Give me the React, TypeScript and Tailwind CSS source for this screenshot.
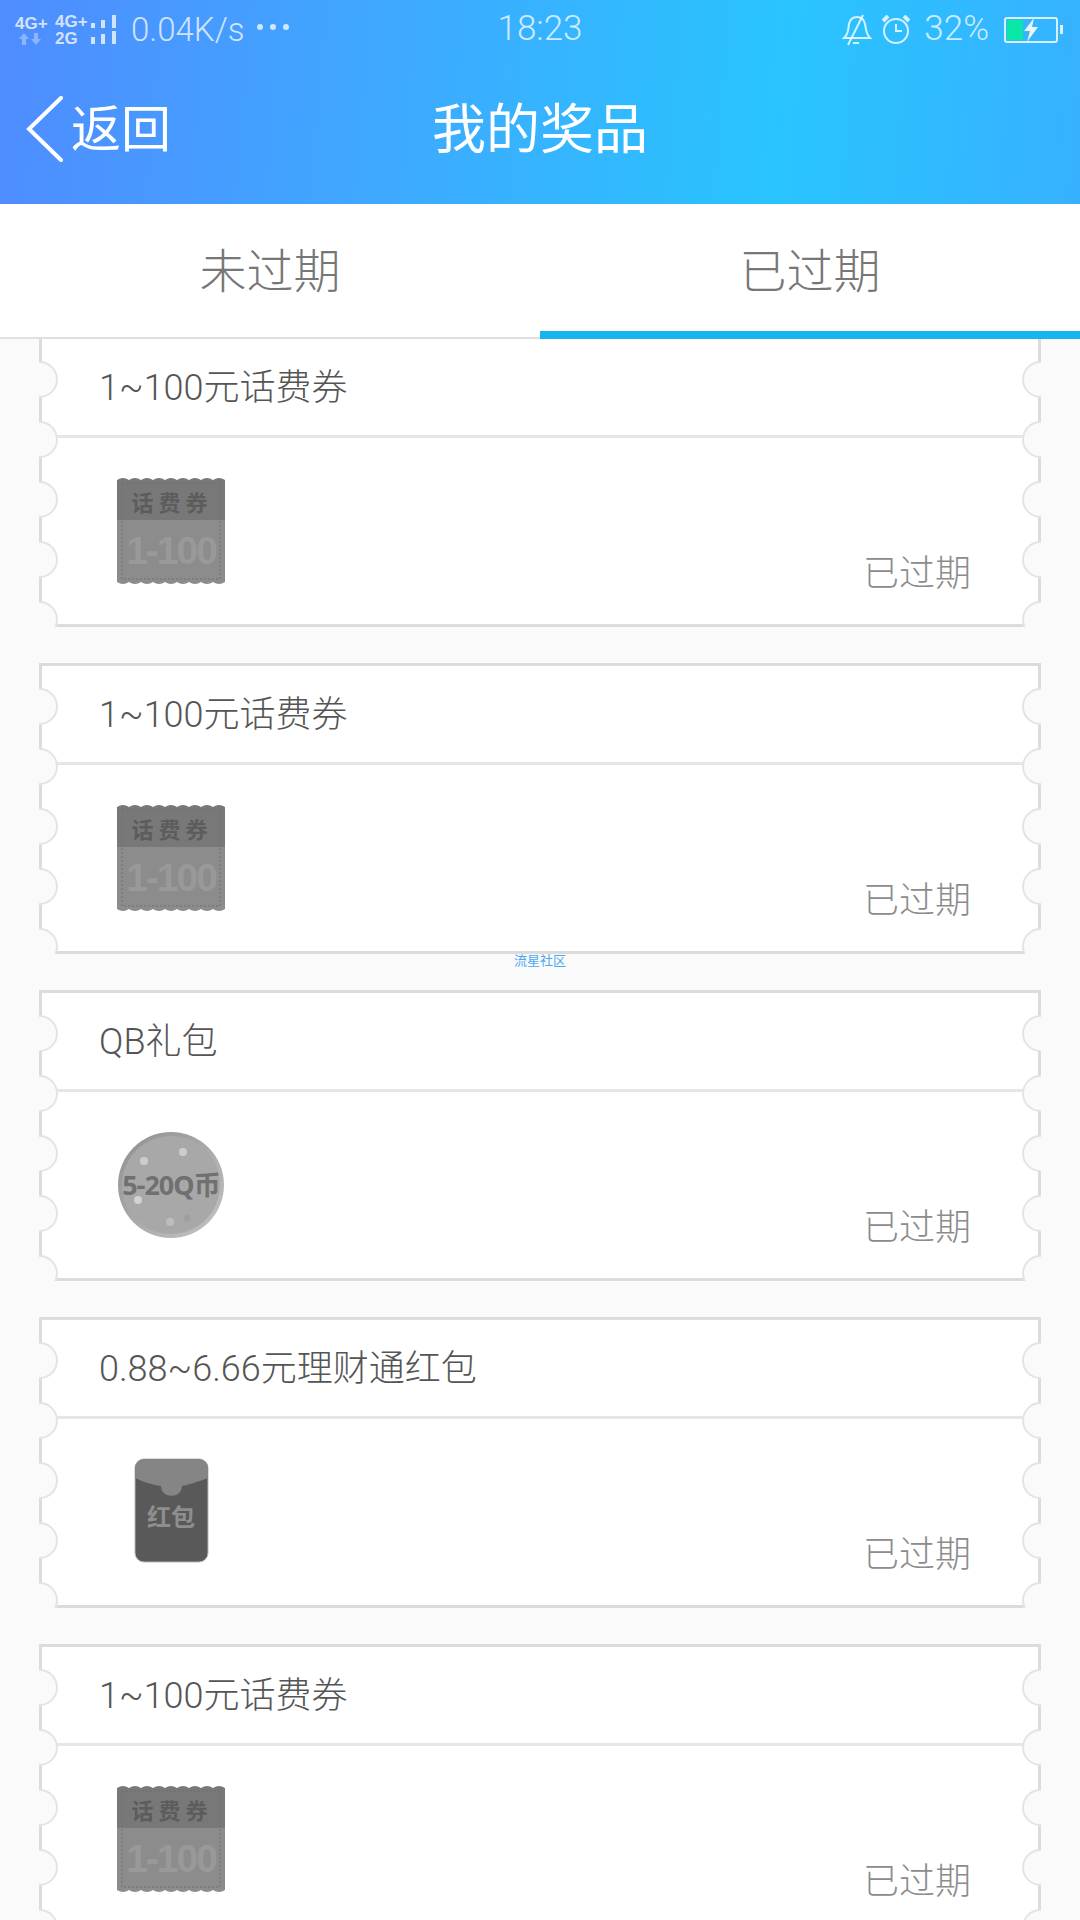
const prizes = [
  { id: 1, title: "1~100元话费券", kind: "voucher" },
  { id: 2, title: "1~100元话费券", kind: "voucher" },
  { id: 3, title: "QB礼包", kind: "coin" },
  { id: 4, title: "0.88~6.66元理财通红包", kind: "packet" },
  { id: 5, title: "1~100元话费券", kind: "voucher" },
];

function scallopPath(y: number, dir: number) {
  let d = `M0 ${y}`;
  for (let i = 0; i < 9; i++) {
    d += ` q6 ${dir * 4} 12 0`;
  }
  return d;
}

function VoucherImage() {
  return (
    <svg width="108" height="108" viewBox="0 0 108 108">
      <rect x="0" y="3" width="108" height="40" fill="#787878" />
      <rect x="0" y="43" width="108" height="62" fill="#8c8c8c" />
      <path d={`${scallopPath(3, -1)} Z`} fill="#787878" />
      <path d={`${scallopPath(105, 1)} Z`} fill="#8c8c8c" />
      <rect x="5" y="6" width="98" height="96" fill="none" stroke="#6f6f6f" strokeWidth="1" strokeDasharray="2 2" />
      <text x="55" y="34" textAnchor="middle" fontSize="22" fontWeight="700" fill="#5c5c5c" letterSpacing="5" fontFamily="'Noto Sans CJK SC', sans-serif">
        话费券
      </text>
      <text x="54" y="87" textAnchor="middle" fontSize="39" fontWeight="700" fill="#999999" letterSpacing="-2" fontFamily="'Liberation Sans', sans-serif">
        1-100
      </text>
    </svg>
  );
}

function CoinImage() {
  return (
    <svg width="108" height="108" viewBox="0 0 108 108">
      <defs>
        <linearGradient id="coinEdge" x1="0" y1="0" x2="1" y2="1">
          <stop offset="0" stopColor="#8f8f8f" />
          <stop offset="1" stopColor="#c4c4c4" />
        </linearGradient>
      </defs>
      <circle cx="54" cy="54" r="53" fill="url(#coinEdge)" />
      <circle cx="54" cy="54" r="49" fill="#a8a8a8" />
      <circle cx="27" cy="30" r="4" fill="#cdcdcd" />
      <circle cx="66" cy="21" r="4" fill="#cdcdcd" />
      <circle cx="21" cy="69" r="4" fill="#d2d2d2" />
      <circle cx="53" cy="91" r="4" fill="#bdbdbd" />
      <circle cx="70" cy="87" r="3.5" fill="#9f9f9f" />
      <text x="54" y="64" textAnchor="middle" fontSize="27" fontWeight="700" fill="#707070" letterSpacing="-1" fontFamily="'Noto Sans', 'Noto Sans CJK SC', sans-serif">
        5-20Q币
      </text>
    </svg>
  );
}

function PacketImage() {
  return (
    <svg width="108" height="108" viewBox="0 0 108 108">
      <rect x="18" y="1" width="73" height="103" rx="9" fill="#595959" stroke="#b5b5b5" strokeWidth="1" />
      <path d="M18 20 V10 a9 9 0 0 1 9 -9 H82 a9 9 0 0 1 9 9 V20 Q75 26 65 28 C65 41 44 41 44 28 Q30 26 18 20 Z" fill="#858585" />
      <text x="54" y="68" textAnchor="middle" fontSize="24" fontWeight="700" fill="#8e8e8e" fontFamily="'Noto Sans CJK SC', sans-serif">
        红包
      </text>
    </svg>
  );
}

function Notches({ side }: { side: "left" | "right" }) {
  return (
    <div className={`absolute top-[25px] flex flex-col gap-[23px] ${side === "left" ? "left-[-18px]" : "right-[-18px]"}`}>
      {[0, 1, 2, 3, 4].map((n) => (
        <div key={n} className="w-[37px] h-[37px] rounded-full bg-[#fafafa] border-2 border-[#e4e4e4]" />
      ))}
    </div>
  );
}

function PrizeCard({ title, kind }: { title: string; kind: string }) {
  return (
    <div className="relative shrink-0 h-[291px] overflow-hidden">
      <div className="h-full flex flex-col bg-white border-[3px] border-[#dcdcdc]">
        <div className="h-[99px] shrink-0 flex items-center pl-[57px] pt-[1px] text-[36px] font-light text-[#555555] border-b-[3px] border-[#e6e6e6]">
          {title}
        </div>
        <div className="flex-1 flex justify-between pl-[75px] pr-[67px]">
          <div className="mt-[39px]">
            {kind === "voucher" && <VoucherImage />}
            {kind === "coin" && <CoinImage />}
            {kind === "packet" && <PacketImage />}
          </div>
          <span className="self-end mb-[25px] text-[36px] leading-[50px] font-light text-[#8c8c8c]">已过期</span>
        </div>
      </div>
      <Notches side="left" />
      <Notches side="right" />
    </div>
  );
}

function StatusBar() {
  return (
    <div className="h-[58px] relative flex items-center justify-between pl-[15px] pr-[22px] pt-[1px] text-white/75 text-[33px] font-light">
      <div className="flex items-center">
        <div className="w-[40px] flex flex-col items-start leading-none">
          <span className="text-[17px] font-bold font-['Liberation_Sans',sans-serif]">4G+</span>
          <svg width="28" height="12" viewBox="0 0 28 12" className="mt-[1px] ml-[3px]">
            <path d="M6 0 L11 6 H8 V12 H4 V6 H1 Z" fill="#ffffff" fillOpacity="0.35" />
            <path d="M18 12 L23 6 H20 V0 H16 V6 H13 Z" fill="#ffffff" fillOpacity="0.35" />
          </svg>
        </div>
        <div className="w-[36px] flex flex-col items-start leading-none">
          <span className="text-[17px] font-bold font-['Liberation_Sans',sans-serif]">4G+</span>
          <span className="text-[17px] font-bold font-['Liberation_Sans',sans-serif]">2G</span>
        </div>
        <svg width="26" height="30" viewBox="0 0 26 30" className="mr-[14px]">
          <g fill="#ffffff" fillOpacity="0.75">
            <rect x="0" y="8" width="4" height="5" />
            <rect x="10" y="5" width="4" height="8" />
            <rect x="21" y="0" width="4" height="13" />
            <rect x="0" y="22" width="4" height="7" />
            <rect x="10" y="19" width="4" height="10" />
            <rect x="21" y="16" width="4" height="13" />
          </g>
        </svg>
        <span>0.04K/s</span>
        <svg width="34" height="8" viewBox="0 0 34 8" className="ml-[11px] mb-[6px]">
          <g fill="#ffffff" fillOpacity="0.75">
            <circle cx="4" cy="4" r="3" />
            <circle cx="17" cy="4" r="3" />
            <circle cx="30" cy="4" r="3" />
          </g>
        </svg>
      </div>
      <span className="absolute left-1/2 -translate-x-1/2 text-[35px]">18:23</span>
      <div className="flex items-center">
        <svg width="30" height="32" viewBox="0 0 30 32" fill="none" stroke="#ffffff" strokeOpacity="0.8" strokeWidth="2">
          <path d="M2 24 C7 20 6 15 7 10 C8 5 11 3 15 3 C19 3 22 5 23 10 C24 15 24 20 28 24 Z" />
          <path d="M11 29 H17" />
          <path d="M21 1 L6 31" />
        </svg>
        <svg width="28" height="30" viewBox="0 0 28 30" fill="none" stroke="#ffffff" strokeOpacity="0.8" strokeWidth="2" className="ml-[10px]">
          <circle cx="14" cy="16" r="12" />
          <path d="M14 9 V16 H20" />
          <path d="M1 6 L6 1 M27 6 L22 1" strokeWidth="4" />
        </svg>
        <span className="ml-[14px] text-[35px]">32%</span>
        <div className="ml-[15px] relative w-[54px] h-[26px] rounded-[3px] border-2 border-white/80 p-[1px]">
          <div className="w-[16px] h-full bg-[#0ae8a8]" />
          <svg width="16" height="24" viewBox="0 0 16 24" className="absolute left-[17px] top-[-1px]">
            <path d="M11 0 L1 13 H7 L4 24 L15 9 H9 Z" fill="#eef4f6" />
          </svg>
          <div className="absolute right-[-7px] top-[6px] w-[3px] h-[9px] bg-white/80" />
        </div>
      </div>
    </div>
  );
}

function Header() {
  return (
    <div className="h-[204px] shrink-0 bg-[linear-gradient(95deg,#4f8cff_0%,#3fa8ff_35%,#29c4ff_72%,#37b1ff_100%)]">
      <StatusBar />
      <div className="relative h-[146px] flex items-center justify-center text-white">
        <div className="absolute left-[26px] top-[38px] flex items-center">
          <svg width="38" height="66" viewBox="0 0 38 66" fill="none" stroke="#ffffff" strokeWidth="4" strokeLinecap="round">
            <path d="M35 2 L3 33 L35 64" />
          </svg>
          <span className="ml-[7px] mt-[1px] text-[50px] leading-none">返回</span>
        </div>
        <span className="text-[54px] leading-none">我的奖品</span>
      </div>
    </div>
  );
}

function Tabs() {
  return (
    <div className="relative z-10 h-[135px] shrink-0 flex bg-white border-b-2 border-[#e0e0e0]">
      <div className="flex-1 flex items-center justify-center pt-[3px] text-[47px] font-light text-[#777777]">未过期</div>
      <div className="flex-1 flex items-center justify-center pt-[3px] text-[47px] font-light text-[#777777] relative">
        已过期
        <div className="absolute left-0 right-0 bottom-[-2px] h-[8px] bg-[#16b5f0]" />
      </div>
    </div>
  );
}

export default function App() {
  return (
    <div className="w-[1080px] h-[1920px] overflow-hidden flex flex-col bg-[#fafafa] font-['Roboto','Noto_Sans_CJK_SC',sans-serif]">
      <Header />
      <Tabs />
      <div className="relative flex-1 overflow-hidden">
        <div className="flex flex-col gap-[36px] px-[39px] mt-[-3px]">
          {prizes.map((p) => (
            <PrizeCard key={p.id} title={p.title} kind={p.kind} />
          ))}
        </div>
        <span className="absolute left-[514px] top-[615px] text-[13px] leading-[14px] text-[#4aa8f0]">流星社区</span>
      </div>
    </div>
  );
}
